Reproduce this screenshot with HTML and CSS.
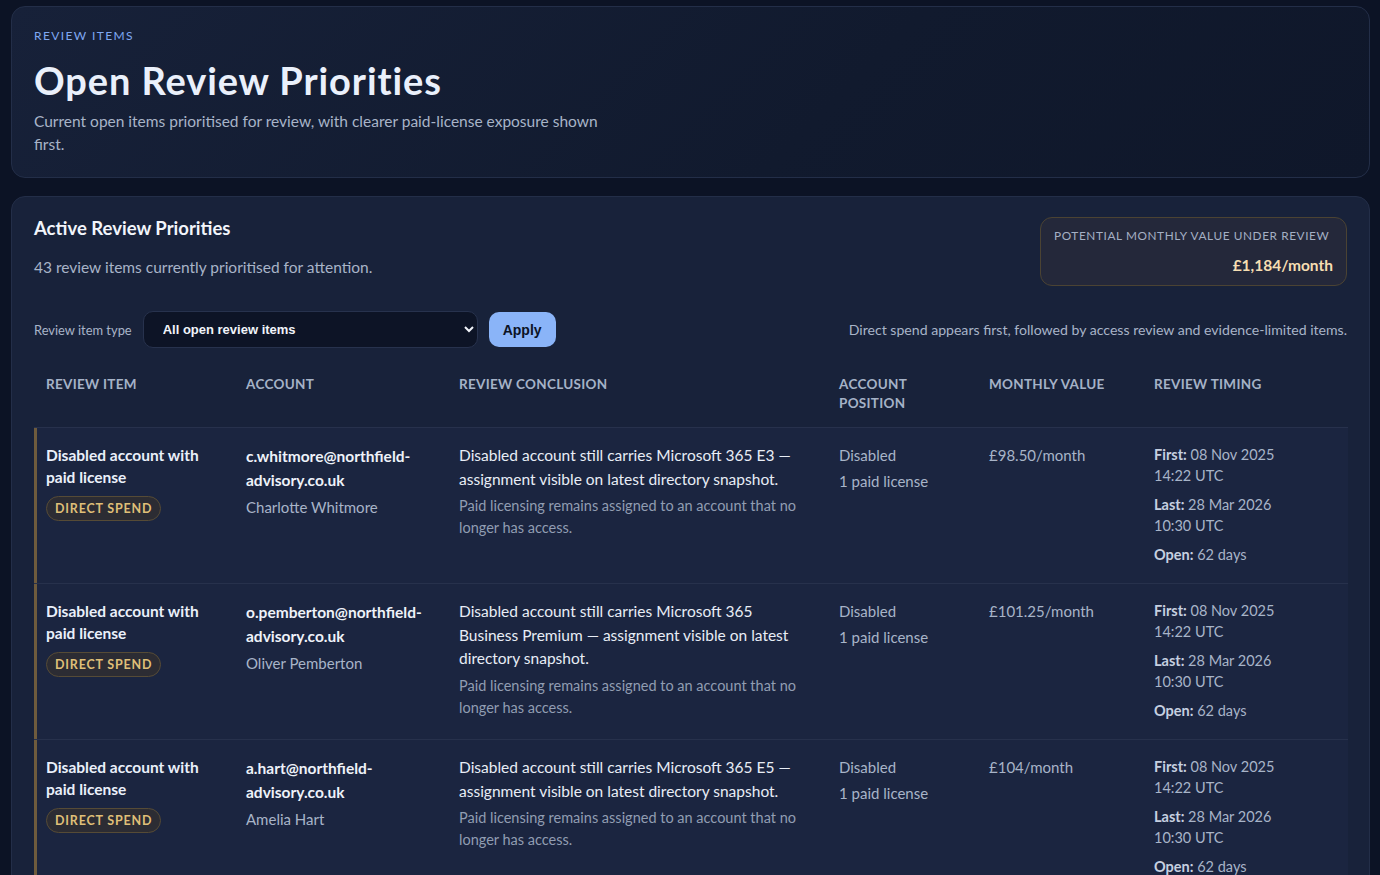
FILE: index.html
```html
<!DOCTYPE html>
<html lang="en">
<head>
<meta charset="utf-8">
<title>Open Review Priorities</title>
<link rel="stylesheet" href="styles.css">
</head>
<body>
<section class="hero">
  <div class="eyebrow">REVIEW ITEMS</div>
  <h1 class="title">Open Review Priorities</h1>
  <p class="lede">Current open items prioritised for review, with clearer paid-license exposure shown first.</p>
</section>

<section class="panel">
  <div class="panel-head">
    <div class="panel-intro">
      <h2 class="panel-title">Active Review Priorities</h2>
      <p class="panel-sub">43 review items currently prioritised for attention.</p>
    </div>
    <div class="stat">
      <div class="stat-label">POTENTIAL MONTHLY VALUE UNDER REVIEW</div>
      <div class="stat-value">£1,184/month</div>
    </div>
  </div>

  <form class="filters">
    <label class="filter-label" for="type">Review item type</label>
    <select id="type" class="filter-select">
      <option>All open review items</option>
      <option>Direct spend</option>
      <option>Access review</option>
      <option>Evidence-limited</option>
    </select>
    <button type="button" class="apply">Apply</button>
    <span class="filter-note">Direct spend appears first, followed by access review and evidence-limited items.</span>
  </form>

  <table class="grid">
    <colgroup>
      <col class="c1"><col class="c2"><col class="c3"><col class="c4"><col class="c5"><col class="c6">
    </colgroup>
    <thead>
      <tr>
        <th>Review item</th>
        <th>Account</th>
        <th>Review conclusion</th>
        <th>Account position</th>
        <th>Monthly value</th>
        <th>Review timing</th>
      </tr>
    </thead>
    <tbody>
      <tr>
        <td class="item">
          <div class="item-title">Disabled account with paid license</div>
          <span class="badge">DIRECT SPEND</span>
        </td>
        <td>
          <div class="email">c.whitmore@northfield-advisory.co.uk</div>
          <div class="person">Charlotte Whitmore</div>
        </td>
        <td>
          <div class="concl">Disabled account still carries Microsoft 365 E3 — assignment visible on latest directory snapshot.</div>
          <div class="concl-sub">Paid licensing remains assigned to an account that no longer has access.</div>
        </td>
        <td>
          <div class="pos">Disabled</div>
          <div class="pos">1 paid license</div>
        </td>
        <td><div class="value">£98.50/month</div></td>
        <td>
          <div class="time"><b>First:</b> 08 Nov 2025 14:22 UTC</div>
          <div class="time"><b>Last:</b> 28 Mar 2026 10:30 UTC</div>
          <div class="time"><b>Open:</b> 62 days</div>
        </td>
      </tr>
      <tr>
        <td class="item">
          <div class="item-title">Disabled account with paid license</div>
          <span class="badge">DIRECT SPEND</span>
        </td>
        <td>
          <div class="email">o.pemberton@northfield-advisory.co.uk</div>
          <div class="person">Oliver Pemberton</div>
        </td>
        <td>
          <div class="concl">Disabled account still carries Microsoft 365 Business Premium — assignment visible on latest directory snapshot.</div>
          <div class="concl-sub">Paid licensing remains assigned to an account that no longer has access.</div>
        </td>
        <td>
          <div class="pos">Disabled</div>
          <div class="pos">1 paid license</div>
        </td>
        <td><div class="value">£101.25/month</div></td>
        <td>
          <div class="time"><b>First:</b> 08 Nov 2025 14:22 UTC</div>
          <div class="time"><b>Last:</b> 28 Mar 2026 10:30 UTC</div>
          <div class="time"><b>Open:</b> 62 days</div>
        </td>
      </tr>
      <tr>
        <td class="item">
          <div class="item-title">Disabled account with paid license</div>
          <span class="badge">DIRECT SPEND</span>
        </td>
        <td>
          <div class="email">a.hart@northfield-advisory.co.uk</div>
          <div class="person">Amelia Hart</div>
        </td>
        <td>
          <div class="concl">Disabled account still carries Microsoft 365 E5 — assignment visible on latest directory snapshot.</div>
          <div class="concl-sub">Paid licensing remains assigned to an account that no longer has access.</div>
        </td>
        <td>
          <div class="pos">Disabled</div>
          <div class="pos">1 paid license</div>
        </td>
        <td><div class="value">£104/month</div></td>
        <td>
          <div class="time"><b>First:</b> 08 Nov 2025 14:22 UTC</div>
          <div class="time"><b>Last:</b> 28 Mar 2026 10:30 UTC</div>
          <div class="time"><b>Open:</b> 62 days</div>
        </td>
      </tr>
      <tr>
        <td class="item">
          <div class="item-title">Disabled account with paid license</div>
          <span class="badge">DIRECT SPEND</span>
        </td>
        <td>
          <div class="email">j.turner@northfield-advisory.co.uk</div>
          <div class="person">James Turner</div>
        </td>
        <td>
          <div class="concl">Disabled account still carries Microsoft 365 E3 — assignment visible on latest directory snapshot.</div>
          <div class="concl-sub">Paid licensing remains assigned to an account that no longer has access.</div>
        </td>
        <td>
          <div class="pos">Disabled</div>
          <div class="pos">1 paid license</div>
        </td>
        <td><div class="value">£98.50/month</div></td>
        <td>
          <div class="time"><b>First:</b> 08 Nov 2025 14:22 UTC</div>
          <div class="time"><b>Last:</b> 28 Mar 2026 10:30 UTC</div>
          <div class="time"><b>Open:</b> 62 days</div>
        </td>
      </tr>
    </tbody>
  </table>
</section>
</body>
</html>
```

FILE: styles.css
```css
* { box-sizing: border-box; }

html, body {
  background: #0c1325;
}

body {
  margin: 0;
  padding: 6px 10px 24px 11px;
  font-family: Lato, "Noto Sans", "DejaVu Sans", sans-serif;
  color: #e6ecf5;
}

.hero {
  border: 1px solid #232e48;
  border-radius: 14px;
  background: linear-gradient(135deg, #172139 0%, #111a2e 60%, #0f172a 100%);
  padding: 21px 22px 21px;
  margin-bottom: 18px;
}

.eyebrow {
  font-size: 12px;
  line-height: 16px;
  letter-spacing: 1.4px;
  color: #7fa8f2;
}

.title {
  margin: 14px 0 8px;
  font-size: 38px;
  line-height: 44px;
  font-weight: 700;
  letter-spacing: 0.9px;
  color: #eaf0fb;
}

.lede {
  margin: 0;
  max-width: 575px;
  font-size: 15.5px;
  line-height: 23px;
  color: #a8b4c8;
}

.panel {
  border: 1px solid #232e48;
  border-radius: 14px;
  background: #18223a;
  padding: 19px 22px 22px;
}

.panel-head {
  display: flex;
  justify-content: space-between;
  align-items: flex-start;
  margin-bottom: 25px;
}

.panel-title {
  margin: 0;
  font-size: 18.5px;
  line-height: 24px;
  font-weight: 700;
  color: #f2f5fb;
}

.panel-sub {
  margin: 16px 0 0;
  font-size: 15.5px;
  line-height: 22px;
  color: #a8b4c8;
}

.stat {
  width: 307px;
  margin-top: 1px;
  border: 1px solid #4b4333;
  border-radius: 12px;
  background: #24283a;
  padding: 10px 13px 10px;
  text-align: left;
}

.stat-label {
  white-space: nowrap;
  font-size: 11.8px;
  line-height: 16px;
  letter-spacing: 0.6px;
  color: #a4b0c4;
}

.stat-value {
  margin-top: 11px;
  text-align: right;
  font-size: 15.5px;
  line-height: 20px;
  font-weight: 700;
  color: #f6deb2;
}

.filters {
  display: flex;
  align-items: center;
  gap: 11px;
  margin: 0 0 15px;
}

.filter-label {
  font-size: 12.9px;
  color: #a8b4c8;
}

.filter-select {
  width: 335px;
  height: 37px;
  padding: 0 10px 0 15px;
  border: 1px solid #27324d;
  border-radius: 10px;
  background: #0d1426;
  color: #f1f4fa;
  font-family: "Liberation Sans", Arial, sans-serif;
  font-size: 13px;
  font-weight: 700;
}

.apply {
  height: 35px;
  padding: 0 14px;
  border: 0;
  border-radius: 10px;
  background: #8ab4f8;
  color: #0c1325;
  font-family: "Liberation Sans", Arial, sans-serif;
  font-size: 14px;
  font-weight: 700;
}

.filter-note {
  margin-left: auto;
  font-size: 14.1px;
  color: #a8b4c8;
}

.grid {
  width: 100%;
  table-layout: fixed;
  border-collapse: collapse;
}

.c1 { width: 200px; }
.c2 { width: 213px; }
.c3 { width: 380px; }
.c4 { width: 150px; }
.c5 { width: 165px; }
.c6 { width: 206px; }

.grid th {
  padding: 12px 12px 14px;
  text-align: left;
  vertical-align: top;
  font-size: 13.5px;
  line-height: 19px;
  font-weight: 700;
  letter-spacing: 0.3px;
  text-transform: uppercase;
  color: #a5b2c7;
}

.grid tbody tr {
  background: #1b2540;
  border-top: 1px solid #27314c;
}

.grid td {
  padding: 16px 12px 18px;
  vertical-align: top;
  font-size: 15px;
  color: #a8b4c8;
}

.grid td.item {
  box-shadow: inset 3px 0 0 #6e5b3d;
}

.item-title {
  font-size: 15.5px;
  line-height: 22px;
  font-weight: 700;
  color: #eaf0fa;
}

.badge {
  display: inline-block;
  margin-top: 8px;
  height: 25px;
  line-height: 23px;
  padding: 0 8px;
  border: 1px solid #564b36;
  border-radius: 13px;
  background: #2c2c33;
  font-size: 12.5px;
  font-weight: 700;
  letter-spacing: 0.8px;
  color: #dfbf78;
}

.email {
  font-size: 15.5px;
  line-height: 24px;
  font-weight: 700;
  color: #eef2f9;
  overflow-wrap: anywhere;
}

.person {
  margin-top: 4px;
  font-size: 15px;
  line-height: 22px;
}

.concl {
  font-size: 15.5px;
  line-height: 23.5px;
  color: #e8edf6;
}

.concl-sub {
  margin-top: 4px;
  font-size: 14.5px;
  line-height: 22px;
  color: #919db2;
}

.pos {
  font-size: 15px;
  line-height: 22px;
}

.pos + .pos {
  margin-top: 4px;
}

.value {
  font-size: 15px;
  line-height: 22px;
}

.time {
  max-width: 150px;
  font-size: 14.5px;
  line-height: 21px;
}

.time + .time {
  margin-top: 8px;
}

.time b {
  font-weight: 700;
  color: #c6d0e0;
}
```
